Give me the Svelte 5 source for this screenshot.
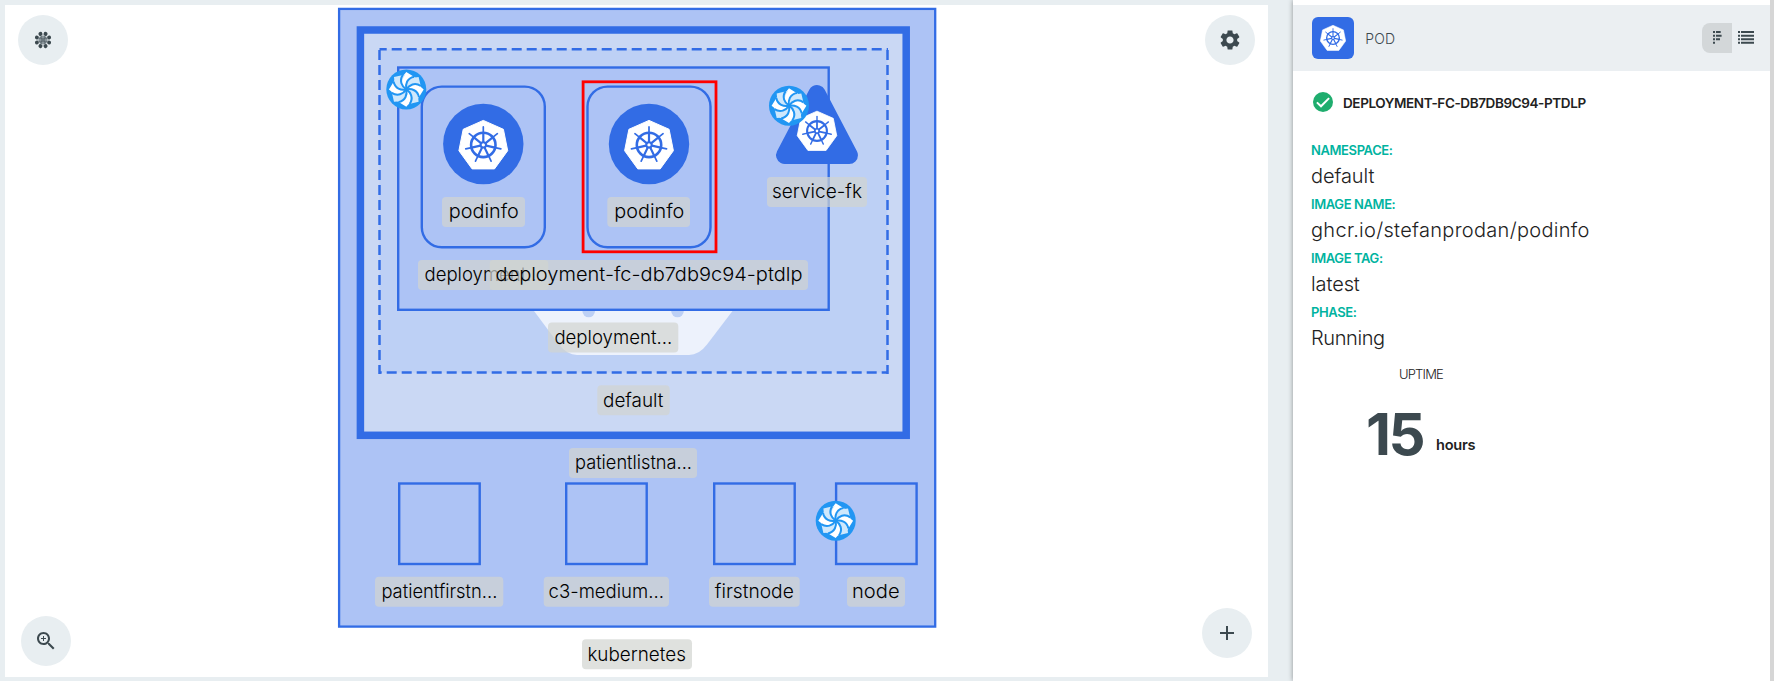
<script>
  const labels = [
    { t: 'podinfo', x: 442, y: 197, w: 83, a: 448.8, n: 70 },
    { t: 'podinfo', x: 607.3, y: 197, w: 82.7, a: 614.3, n: 70 },
    { t: 'deployment...', x: 418, y: 260, w: 130.3, a: 424.5, n: 117.5 },
    { t: 'deployment-fc-db7db9c94-ptdlp', x: 489.7, y: 260, w: 318.3, a: 495.5, n: 307 },
    { t: 'deployment...', x: 548, y: 322.4, w: 130.3, a: 554.4, n: 117.8 },
    { t: 'default', x: 597.3, y: 385.2, w: 72.4, a: 603, n: 60.5 },
    { t: 'patientlistna...', x: 569, y: 448, w: 128, a: 575, n: 117 },
    { t: 'service-fk', x: 767, y: 177, w: 100, a: 772, n: 90 },
    { t: 'patientfirstn...', x: 375, y: 576.8, w: 128.3, a: 381.4, n: 116 },
    { t: 'c3-medium...', x: 543.7, y: 576.8, w: 125.3, a: 548.6, n: 115.4 },
    { t: 'firstnode', x: 709, y: 576.8, w: 90.7, a: 714.8, n: 79 },
    { t: 'node', x: 847, y: 576.8, w: 58, a: 852, n: 47.6 },
    { t: 'kubernetes', x: 582, y: 639.3, w: 110, a: 587.4, n: 98.6 },
  ];
  const nodes = [399.2, 566.2, 714.2, 836.1];
  const pods = [
    { x: 421.8, c: 483.3 },
    { x: 587.5, c: 649 },
  ];
  const badges = [
    [406.3, 89.4],
    [789, 105.7],
    [835.7, 520.7],
  ];
  const spokes = [0, 1, 2, 3, 4, 5, 6].map((i) => (i * 360) / 7);
  const blades = [0, 45, 90, 135, 180, 225, 270, 315];
  const details = [
    { k: 'NAMESPACE:', v: 'default', gap: -0.1 },
    { k: 'IMAGE NAME:', v: 'ghcr.io/stefanprodan/podinfo', gap: 0.3 },
    { k: 'IMAGE TAG:', v: 'latest', gap: -0.1 },
    { k: 'PHASE:', v: 'Running', gap: -0.4 },
  ];
</script>

{#snippet wheel()}
  <path d="M0 -24.5 L20.1 -15.6 L24.4 5.8 L11.2 24 H-11.2 L-24.4 5.8 L-20.1 -15.6 Z" fill="#fff" stroke="#fff" stroke-width="1" stroke-linejoin="round" />
  <g fill="none" stroke="#326ce5" stroke-linecap="round">
    <circle r="12.2" stroke-width="2.6" />
    {#each spokes as s}
      <g transform="rotate({s})">
        <path d="M0 -3 V-12" stroke-width="2.2" />
        <path d="M0 -12 V-18" stroke-width="1.7" />
      </g>
    {/each}
    <circle r="2.7" stroke-width="2" />
  </g>
{/snippet}

<div class="app">
  <main class="canvas">
    <svg class="graph" viewBox="5 5 1263 672" width="1263" height="672">
      <g stroke="#326ce5" stroke-width="2.3">
        <rect x="339.1" y="8.9" width="596.1" height="617.7" fill="#adc3f5" />
        <rect x="360.4" y="30" width="545.8" height="405.3" fill="#cad8f4" stroke-width="7.5" />
        <rect x="379.5" y="49.2" width="508" height="323.4" fill="#bdd0f5" stroke="none" />
        <g stroke-width="2.5" stroke-dasharray="10 5">
          <path d="M379.5 49.2 H888" stroke-dashoffset="2.8" />
          <path d="M379.5 372.6 H888" stroke-dashoffset="7.8" />
          <path d="M379.5 48 V374" stroke-dashoffset="13" />
          <path d="M887.5 48 V374" stroke-dashoffset="13" />
        </g>
      </g>
      <path d="M534 311 L559 344.5 Q567 355 577 355 H689 Q699 355 707 344.5 L732.5 311 Z" fill="#edf2fc" />
      <circle cx="588.7" cy="311" r="6.3" fill="#bdd0f5" />
      <circle cx="677.5" cy="311" r="6.3" fill="#bdd0f5" />
      <g fill="#adc3f5" stroke="#326ce5" stroke-width="2.4">
        <rect x="398.2" y="67.5" width="430.5" height="242.3" />
        {#each pods as p}
          <rect x={p.x} y="86.6" width="123" height="160.6" rx="20" />
        {/each}
        {#each nodes as x}
          <rect {x} y="483.5" width="80.5" height="80.5" />
        {/each}
      </g>
      <rect x="583.1" y="81.8" width="132.9" height="170" fill="none" stroke="#f00" stroke-width="2.8" />
      {#each pods as p}
        <circle cx={p.c} cy="144" r="40.2" fill="#326ce5" />
        <g transform="translate({p.c} 144.9)">{@render wheel()}</g>
      {/each}
      <path d="M817 93.8 L784.8 155.2 H849.2 Z" fill="#326ce5" stroke="#326ce5" stroke-width="17.5" stroke-linejoin="round" />
      <g transform="translate(817 131) scale(.81)">{@render wheel()}</g>
      {#each badges as [x, y]}
        <g transform="translate({x} {y})">
          <circle r="20" fill="#2196f3" />
          {#each blades as b, i}
            <path
              transform="rotate({b})"
              d="M0 0 C-5 -3 -7 -10 0 -17.4 L10 -11.2 C2.8 -10.3 -1.4 -5.7 0 0 Z"
              fill={i % 2 ? '#cfe8fc' : '#fff'}
            />
          {/each}
          {#each blades as b}
            <path transform="rotate({b})" d="M0 0 C-4.5 -3 -7.5 -8.5 -3.4 -14.6" fill="none" stroke="#2196f3" stroke-width="2" />
          {/each}
        </g>
      {/each}
      {#each labels as l}
        <rect x={l.x} y={l.y} width={l.w} height="30" rx="4" fill="#d1d4d0" fill-opacity=".7" />
        <text x={l.a} y={l.y + 21.4} textLength={l.n} lengthAdjust="spacingAndGlyphs">{l.t}</text>
      {/each}
    </svg>

    <button class="round tl" aria-label="Layers">
      <svg viewBox="-12 -12 24 24" width="24" height="24" fill="#3c494f">
        <circle r="4.6" fill="#89949a" />
        <path d="M-4 -1.5 H4 M-4 1.5 H4 M-1.5 -4 V4 M1.5 -4 V4 M-3 -3 L3 3 M3 -3 L-3 3" stroke="#59656b" stroke-width=".6" />
        {#each blades as b}
          <circle cy="-6.6" r="2" transform="rotate({b + 22.5})" />
        {/each}
      </svg>
    </button>
    <button class="round tr" aria-label="Settings">
      <svg viewBox="0 0 24 24" width="24" height="24" fill="#3c494f">
        <path d="M19.14 12.94c.04-.3.06-.61.06-.94 0-.32-.02-.64-.07-.94l2.03-1.58c.18-.14.23-.41.12-.61l-1.92-3.32c-.12-.22-.37-.29-.59-.22l-2.39.96c-.5-.38-1.03-.7-1.62-.94l-.36-2.54c-.04-.24-.24-.41-.48-.41h-3.84c-.24 0-.43.17-.47.41l-.36 2.54c-.59.24-1.13.57-1.62.94l-2.39-.96c-.22-.08-.47 0-.59.22L2.74 8.87c-.12.21-.08.47.12.61l2.03 1.58c-.05.3-.09.63-.09.94s.02.64.07.94l-2.03 1.58c-.18.14-.23.41-.12.61l1.92 3.32c.12.22.37.29.59.22l2.39-.96c.5.38 1.03.7 1.62.94l.36 2.54c.05.24.24.41.48.41h3.84c.24 0 .44-.17.47-.41l.36-2.54c.59-.24 1.13-.56 1.62-.94l2.39.96c.22.08.47 0 .59-.22l1.92-3.32c.12-.22.07-.47-.12-.61l-2.01-1.58zM12 15.6c-1.98 0-3.6-1.62-3.6-3.6s1.62-3.6 3.6-3.6 3.6 1.62 3.6 3.6-1.62 3.6-3.6 3.6z" />
      </svg>
    </button>
    <button class="round bl" aria-label="Zoom in">
      <svg viewBox="0 0 24 24" width="24" height="24" fill="#3c494f">
        <path d="M15.5 14h-.79l-.28-.27C15.41 12.59 16 11.11 16 9.5 16 5.91 13.09 3 9.5 3S3 5.91 3 9.5 5.91 16 9.5 16c1.61 0 3.09-.59 4.23-1.57l.27.28v.79l5 4.99L20.49 19l-4.99-5zm-6 0C7.01 14 5 11.99 5 9.5S7.01 5 9.5 5 14 7.01 14 9.5 11.99 14 9.5 14zm2.5-4h-2v2H9v-2H7V9h2V7h1v2h2v1z" />
      </svg>
    </button>
    <button class="round br" aria-label="Add">
      <svg viewBox="0 0 24 24" width="24" height="24" fill="#3c494f"><path d="M19 13h-6v6h-2v-6H5v-2h6V5h2v6h6v2z" /></svg>
    </button>
  </main>

  <aside class="panel">
    <header>
      <div class="kind-icon">
        <svg viewBox="-25 -25 50 50" width="26" height="26">{@render wheel()}</svg>
      </div>
      <span class="kind">POD</span>
      <div class="views">
        <button class="view on" aria-label="Compact view">
          <svg viewBox="0 0 16 16" width="16" height="16" fill="#3c494f">
            <path d="M4 1h2v2H4zM4 4.7h2v2H4zM4 8.2h2v2H4zM4 11.8h2v2H4zM7 1h4.7v2H7zM7 4.7h5.6v2H7zM7 8.2h4v2H7z" />
          </svg>
        </button>
        <button class="view" aria-label="List view">
          <svg viewBox="0 0 16 16" width="16" height="16" fill="#3c494f">
            <path d="M0 1h2v2H0zM0 4.7h2v2H0zM0 8.2h2v2H0zM0 11.8h2v2H0zM3 1h13v2H3zM3 4.7h13v2H3zM3 8.2h13v2H3zM3 11.8h13v2H3z" />
          </svg>
        </button>
      </div>
    </header>
    <div class="body">
      <div class="title">
        <svg viewBox="2 2 20 20" width="20" height="20">
          <circle cx="12" cy="12" r="10" fill="#1fad6e" />
          <path d="M5.9 12.4 L10 16.3 L18.1 8.1" fill="none" stroke="#fff" stroke-width="2" />
        </svg>
        <h1>DEPLOYMENT-FC-DB7DB9C94-PTDLP</h1>
      </div>
      <dl>
        {#each details as d}
          <dt>{d.k}</dt>
          <dd style="letter-spacing: {d.gap}px">{d.v}</dd>
        {/each}
      </dl>
      <section class="uptime">
        <h2>UPTIME</h2>
        <p><b>15</b><span>hours</span></p>
      </section>
    </div>
  </aside>
</div>

<style>
  :global(body) {
    margin: 0;
    overflow: hidden;
  }
  .app {
    box-sizing: border-box;
    display: flex;
    width: 1774px;
    height: 681px;
    background: #e8eef1;
    font-family: Inter, 'Liberation Sans', sans-serif;
    color: #222;
  }
  .canvas {
    position: relative;
    width: 1263px;
    height: 672px;
    margin: 5px 25px 4px 5px;
    background: #fff;
  }
  .graph {
    display: block;
  }
  .graph text {
    font-size: 19px;
    font-weight: 300;
    fill: #000;
  }
  button {
    display: grid;
    place-items: center;
    padding: 0;
    border: 0;
  }
  .round {
    position: absolute;
    width: 50px;
    height: 50px;
    border-radius: 50%;
    background: #e8eef1;
  }
  .tl { left: 13px; top: 10px; }
  .tr { right: 13px; top: 10px; }
  .bl { left: 16px; bottom: 11px; }
  .br { right: 16px; bottom: 19px; }
  .panel {
    box-sizing: border-box;
    width: 481px;
    height: 681px;
    padding-top: 5px;
    border-right: 4px solid #d6d6d6;
    background: #fff;
    box-shadow: 0 0 5px rgba(0, 0, 0, 0.4);
  }
  header {
    box-sizing: border-box;
    display: flex;
    align-items: center;
    height: 66px;
    padding: 0 10px 0 19.3px;
    background: #ebeff2;
  }
  .kind-icon {
    display: grid;
    place-items: center;
    width: 41.4px;
    height: 41.4px;
    border-radius: 6px;
    background: #326ce5;
  }
  .kind {
    margin: 0 0 0 11.5px;
    font-size: 14px;
    font-weight: 300;
    color: #3c494f;
    letter-spacing: 0.2px;
  }
  .views {
    display: flex;
    margin-left: auto;
  }
  .view {
    width: 30px;
    height: 30px;
    background: none;
  }
  .view:last-child {
    width: 28px;
  }
  .view.on {
    border-radius: 8px 0 0 8px;
    background: #d3d7d9;
  }
  .body {
    padding: 19px 18px;
  }
  .title {
    display: flex;
    align-items: center;
    gap: 10px;
    height: 24px;
    padding-left: 2px;
  }
  h1 {
    margin: 2px 0 0;
    font-size: 13.5px;
    font-weight: 600;
    line-height: 20px;
    letter-spacing: -0.39px;
  }
  dl {
    margin: 26px 0 0;
  }
  dt {
    height: 20px;
    font-size: 13px;
    font-weight: 600;
    line-height: 20px;
    letter-spacing: -0.4px;
    color: #00b39f;
  }
  dd {
    height: 34px;
    margin: 0;
    font-size: 20px;
    font-weight: 300;
    line-height: 32px;
  }
  .uptime {
    width: 220px;
  }
  h2 {
    margin: 8px 0 0;
    font-size: 13px;
    font-weight: 300;
    line-height: 20px;
    letter-spacing: -0.8px;
    text-align: center;
  }
  p {
    display: flex;
    align-items: baseline;
    margin: 10px 0 0 55px;
    line-height: 80px;
  }
  b {
    font-size: 58px;
    font-weight: 700;
    letter-spacing: -2.5px;
    color: #3c494f;
  }
  p span {
    position: relative;
    top: -5px;
    margin-left: 13px;
    font-size: 14.6px;
    font-weight: 600;
    letter-spacing: -0.3px;
  }
</style>
